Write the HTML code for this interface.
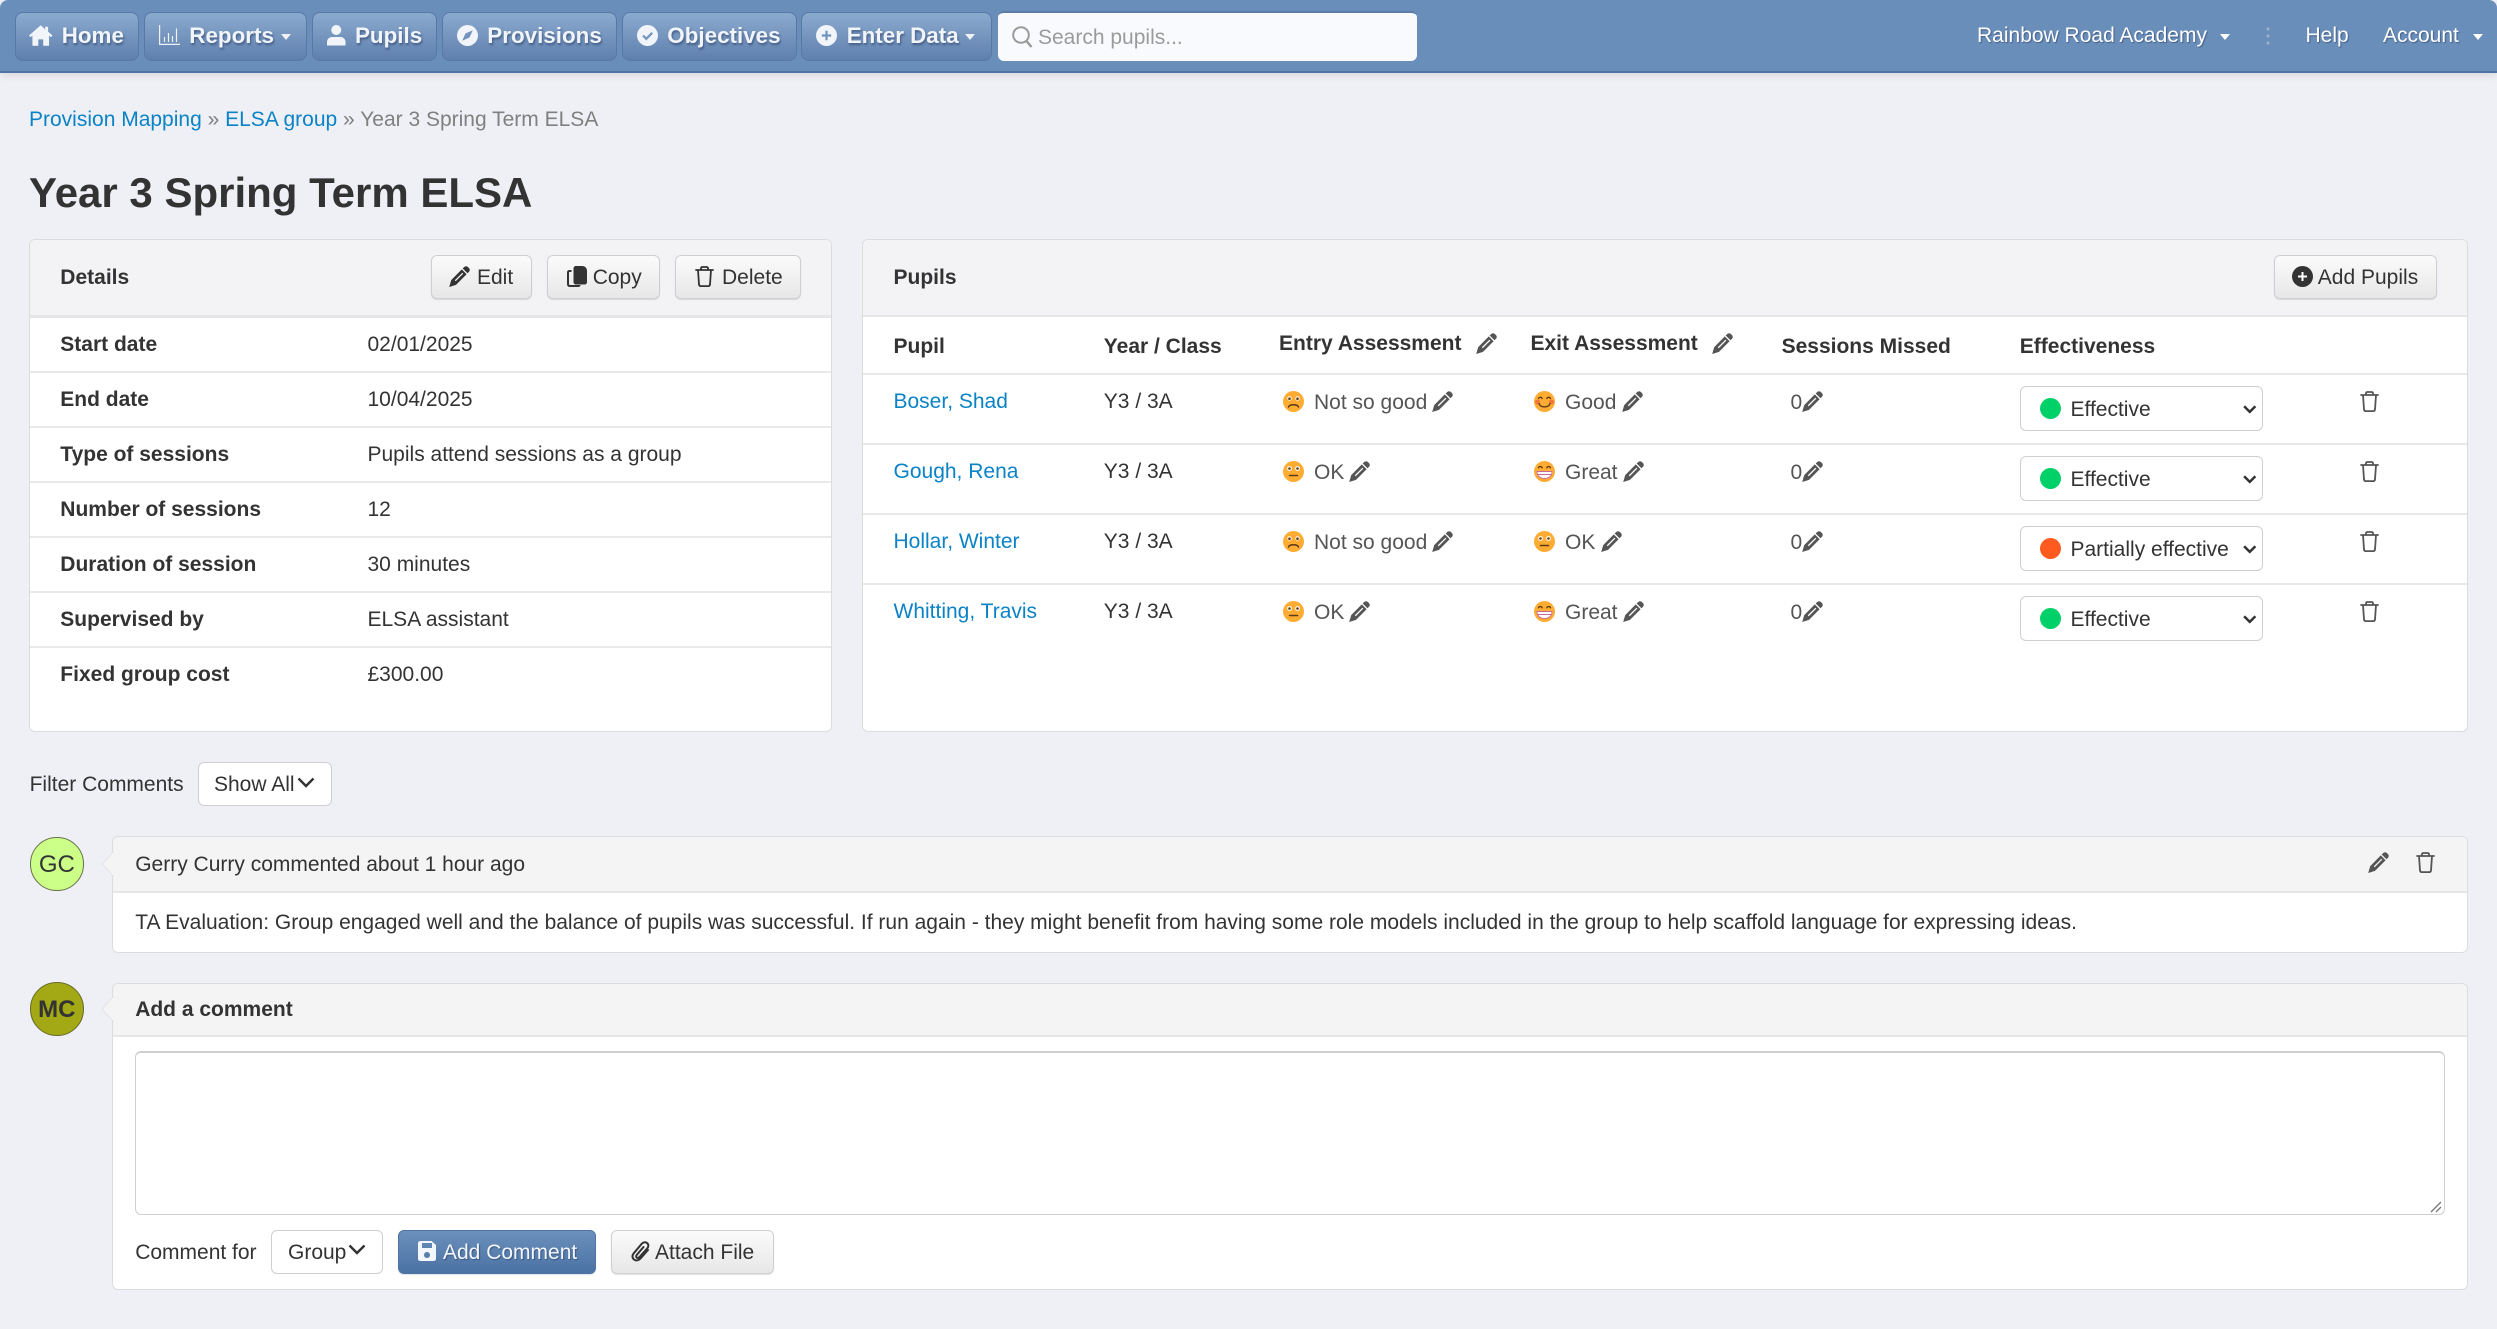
<!DOCTYPE html>
<html><head><meta charset="utf-8"><title>Year 3 Spring Term ELSA</title>
<style>
html,body{margin:0;padding:0;width:2497px;height:1329px;overflow:hidden;background:#eff0f6;font-family:"Liberation Sans",sans-serif;font-size:21px;color:#333}
.t{position:absolute;white-space:nowrap;line-height:30px;height:30px;margin-top:1px}
.b{font-weight:bold}
.a{color:#0a83c6}
.g{color:#555}
.box{position:absolute;box-sizing:border-box}
svg.i{position:absolute;overflow:visible}
#nav{left:0;top:0;width:2497px;height:73px;background:#6a8eba;border-bottom:2px solid #4f73a3;border-radius:8px 8px 0 0;box-shadow:0 3px 8px rgba(0,0,0,.09)}
.nb{position:absolute;box-sizing:border-box;top:12px;height:49px;border:1px solid #5878a6;border-radius:8px;background:linear-gradient(#8baacf,#5f80ae)}
.nt{position:absolute;white-space:nowrap;top:20px;line-height:32px;height:32px;font-size:22.4px;font-weight:bold;color:#f1f4f9;text-shadow:1px 2px 2px rgba(30,50,90,.55)}
.nr{position:absolute;white-space:nowrap;top:21px;line-height:30px;height:30px;color:#fff;text-shadow:1px 1px 1px rgba(30,50,90,.5)}
.car{position:absolute;width:0;height:0;border-left:5.5px solid transparent;border-right:5.5px solid transparent;border-top:6px solid #eef2f8}
.card{background:#fff;border:1.5px solid #dcdcdf;border-radius:6px}
.hd{position:absolute;left:0;top:0;right:0;background:#f3f3f6;border-radius:6px 6px 0 0}
.ln{position:absolute;height:2px;background:#e9e9eb}
.btn{position:absolute;box-sizing:border-box;top:255px;height:44px;border:1.5px solid #cfcfd2;border-radius:6px;background:linear-gradient(#fbfbfb,#e7e7e8);box-shadow:0 1px 1px rgba(0,0,0,.12)}
.sel{position:absolute;box-sizing:border-box;background:#fff;border:1.5px solid #cfcfd2;border-radius:6px}
.dot{position:absolute;width:21px;height:21px;border-radius:50%}
</style></head><body>
<svg width="0" height="0" style="position:absolute">
<defs>
<symbol id="pen" viewBox="0 0 21 21"><path fill="currentColor" d="M15.2 1a2.6 2.6 0 0 1 3.7 0l1.100 1.100a2.600 2.600 0 0 1 0 3.700l-1.500 1.500-4.800-4.800z"/><path fill="currentColor" fill-rule="evenodd" d="M12.800 3.400l4.800 4.800L7 18.900.2 21l2-6.900zM13.400 6.700L5.800 14.300l.9.900L14.300 7.600z"/></symbol>
<symbol id="tr" viewBox="0 0 19 21"><path fill="none" stroke="currentColor" stroke-width="1.800" stroke-linecap="round" d="M1 4h17M6 4V2.400C6 1.400 6.800 1 7.500 1h4c.7 0 1.500.4 1.500 1.400V4M3 4l1 14.400c.1 1 .8 1.700 1.700 1.700h7.600c.9 0 1.600-.7 1.700-1.700L16 4"/></symbol>
<symbol id="sad" viewBox="0 0 21 21"><circle cx="10.500" cy="10.500" r="10.500" fill="#ffac33"/><circle cx="6.500" cy="7.500" r="2.200" fill="#fff"/><circle cx="14.500" cy="7.500" r="2.200" fill="#fff"/><circle cx="6.500" cy="7.700" r="1.300" fill="#5b3a1a"/><circle cx="14.500" cy="7.700" r="1.300" fill="#5b3a1a"/><path d="M5.500 16c1.200-3 8.800-3 10 0" fill="none" stroke="#5b3a1a" stroke-width="1.500" stroke-linecap="round"/></symbol>
<symbol id="ok" viewBox="0 0 21 21"><circle cx="10.500" cy="10.500" r="10.500" fill="#ffac33"/><circle cx="6.500" cy="7.500" r="2.400" fill="#fff"/><circle cx="14.500" cy="7.500" r="2.400" fill="#fff"/><circle cx="6.500" cy="7.500" r="1.300" fill="#5b3a1a"/><circle cx="14.500" cy="7.500" r="1.300" fill="#5b3a1a"/><path d="M6.500 14.500h8" stroke="#5b3a1a" stroke-width="1.500" stroke-linecap="round"/></symbol>
<symbol id="gd" viewBox="0 0 21 21"><circle cx="10.500" cy="10.500" r="10.500" fill="#ffac33"/><circle cx="3.500" cy="11" r="2.400" fill="#f4743b"/><circle cx="17.500" cy="11" r="2.400" fill="#f4743b"/><path d="M4.500 7.500c.7-1.700 3-1.700 3.700 0M12.800 7.500c.7-1.700 3-1.700 3.700 0M5 12.500c1.500 4.500 9.500 4.500 11 0" fill="none" stroke="#5b3a1a" stroke-width="1.300" stroke-linecap="round"/></symbol>
<symbol id="gr" viewBox="0 0 21 21"><circle cx="10.500" cy="10.500" r="10.500" fill="#ffac33"/><path d="M4.500 6.800c.7-1.700 3-1.700 3.700 0M12.800 6.800c.7-1.700 3-1.700 3.700 0" fill="none" stroke="#5b3a1a" stroke-width="1.300" stroke-linecap="round"/><path d="M3 10.500h15c0 4.500-3.500 7-7.500 7S3 15 3 10.500z" fill="#fff" stroke="#c46aa0" stroke-width=".9"/><path d="M3.400 13.500h14.200" stroke="#c46aa0" stroke-width="1"/></symbol>
<symbol id="ch" viewBox="0 0 18 11"><path d="M1.500 1.500L9 9l7.500-7.500" fill="none" stroke="currentColor" stroke-width="2.400"/></symbol>
<symbol id="ch2" viewBox="0 0 18 11"><path d="M1.500 1.500L9 9l7.500-7.500" fill="none" stroke="currentColor" stroke-width="3.300"/></symbol>
</defs></svg>

<div class="box" id="nav" style="position:absolute"></div>
<div class="nb" style="left:14.500px;width:124.500px"></div>
<div class="nb" style="left:144.300px;width:163px"></div>
<div class="nb" style="left:312.300px;width:125px"></div>
<div class="nb" style="left:442.300px;width:175px"></div>
<div class="nb" style="left:622.300px;width:174.500px"></div>
<div class="nb" style="left:801.300px;width:190.500px"></div>

<svg class="i" style="left:29px;top:24.500px" width="23.500" height="21" viewBox="0 0 24 21"><path fill="#f1f4f9" d="M12 0L0 10.500l1.500 1.700L3.500 10.600V21h6v-6.500h5V21h6V10.600l2 1.600 1.500-1.700-4.500-3.900V1.500h-3v2.700z"/></svg>
<div class="nt" style="left:61.700px">Home</div>
<svg class="i" style="left:159px;top:25px" width="21" height="20" viewBox="0 0 21 20"><path fill="none" stroke="#eef2f8" stroke-width="1.200" d="M.6 0v19.400H21M5.500 17v-5M9.500 17V8M13.500 17v-6M17.500 17V3.500"/></svg>
<div class="nt" style="left:189.300px">Reports</div><div class="car" style="left:281px;top:34px"></div>
<svg class="i" style="left:326.700px;top:25px" width="18.500" height="20.500" viewBox="0 0 18.500 20.500"><circle cx="9.250" cy="5" r="5" fill="#f1f4f9"/><path fill="#f1f4f9" d="M0 20.500v-3.500c0-3 2.500-5 5-5h8.500c2.500 0 5 2 5 5v3.500z"/></svg>
<div class="nt" style="left:355px">Pupils</div>
<svg class="i" style="left:456.700px;top:25px" width="21" height="21" viewBox="0 0 21 21"><circle cx="10.500" cy="10.500" r="10.500" fill="#f1f4f9"/><path fill="#7394bf" d="M15.800 5.200L12.500 12.500 5.200 15.800 8.500 8.500z"/></svg>
<div class="nt" style="left:487.300px">Provisions</div>
<svg class="i" style="left:637px;top:25px" width="21" height="21" viewBox="0 0 21 21"><circle cx="10.500" cy="10.500" r="10.500" fill="#f1f4f9"/><path fill="none" stroke="#7394bf" stroke-width="2.200" d="M6 10.500l3.300 3.300L15.200 7.800"/></svg>
<div class="nt" style="left:667.300px">Objectives</div>
<svg class="i" style="left:816px;top:25px" width="21" height="21" viewBox="0 0 21 21"><circle cx="10.500" cy="10.500" r="10.500" fill="#f1f4f9"/><path fill="none" stroke="#7394bf" stroke-width="2.200" d="M10.500 5.800v9.400M5.800 10.500h9.400"/></svg>
<div class="nt" style="left:846.700px">Enter Data</div><div class="car" style="left:965px;top:34px"></div>

<div class="box" style="left:997.700px;top:11px;width:419.300px;height:50px;background:#f9fafd;border-radius:6px;border-top:2px solid #5d7ca8"></div>
<svg class="i" style="left:1011.500px;top:26px" width="21" height="22" viewBox="0 0 21 22"><circle cx="9" cy="9" r="7.800" fill="none" stroke="#9a9a9a" stroke-width="2"/><path d="M14.500 15l5 6" stroke="#9a9a9a" stroke-width="2.400"/></svg>
<div class="t" style="left:1038px;top:22px;color:#9b9b9b">Search pupils...</div>

<div class="nr" style="left:1977px">Rainbow Road Academy</div><div class="car" style="left:2220px;top:34px;border-top-color:#fff"></div>
<svg class="i" style="left:2266px;top:27px" width="4" height="18"><circle cx="2" cy="2" r="1.500" fill="#9ab2d0"/><circle cx="2" cy="9" r="1.500" fill="#9ab2d0"/><circle cx="2" cy="16" r="1.500" fill="#9ab2d0"/></svg>
<div class="nr" style="left:2305.500px">Help</div>
<div class="nr" style="left:2383px">Account</div><div class="car" style="left:2473px;top:34px;border-top-color:#fff"></div>

<div class="t" style="left:29px;top:104px"><span class="a">Provision Mapping</span><span style="color:#808080"> » </span><span class="a">ELSA group</span><span style="color:#808080"> » Year 3 Spring Term ELSA</span></div>
<div class="t b" style="left:29px;top:167px;font-size:42px;line-height:50px;height:50px">Year 3 Spring Term ELSA</div>

<!-- Details card -->
<div class="box card" style="left:29px;top:239px;width:803px;height:493px"><div class="hd" style="height:75px;border-bottom:3px solid #e6e6e8"></div></div>
<div class="t b" style="left:60.300px;top:261.500px">Details</div>
<div class="btn" style="left:431.300px;width:100.500px"></div>
<svg class="i" style="left:449px;top:266px;color:#333" width="21" height="21"><use href="#pen"/></svg>
<div class="t" style="left:477px;top:261.500px">Edit</div>
<div class="btn" style="left:547.300px;width:112.500px"></div>
<svg class="i" style="left:566.700px;top:266px" width="20" height="21" viewBox="0 0 20 21"><path fill="#333" d="M9 0h6c3 0 5 2 5 5v11c0 1.500-1 2.500-2.500 2.500H9C7.500 18.500 6.500 17.500 6.500 16V2.500C6.500 1 7.500 0 9 0z"/><path fill="none" stroke="#333" stroke-width="2" d="M4.500 5H2.500C1.500 5 1 5.500 1 6.500V18c0 1 .5 2 2 2h8c1 0 1.500-.5 1.500-1"/></svg>
<div class="t" style="left:592.700px;top:261.500px">Copy</div>
<div class="btn" style="left:675.300px;width:125.500px"></div>
<svg class="i" style="left:695px;top:266px;color:#333" width="19" height="21"><use href="#tr"/></svg>
<div class="t" style="left:722px;top:261.500px">Delete</div>

<div class="ln" style="left:30px;top:371px;width:801px"></div>
<div class="ln" style="left:30px;top:426px;width:801px"></div>
<div class="ln" style="left:30px;top:481px;width:801px"></div>
<div class="ln" style="left:30px;top:536px;width:801px"></div>
<div class="ln" style="left:30px;top:591px;width:801px"></div>
<div class="ln" style="left:30px;top:646px;width:801px"></div>
<div class="t b" style="left:60.300px;top:329px">Start date</div><div class="t" style="left:367.500px;top:329px">02/01/2025</div>
<div class="t b" style="left:60.300px;top:384px">End date</div><div class="t" style="left:367.500px;top:384px">10/04/2025</div>
<div class="t b" style="left:60.300px;top:439px">Type of sessions</div><div class="t" style="left:367.500px;top:439px">Pupils attend sessions as a group</div>
<div class="t b" style="left:60.300px;top:494px">Number of sessions</div><div class="t" style="left:367.500px;top:494px">12</div>
<div class="t b" style="left:60.300px;top:549px">Duration of session</div><div class="t" style="left:367.500px;top:549px">30 minutes</div>
<div class="t b" style="left:60.300px;top:604px">Supervised by</div><div class="t" style="left:367.500px;top:604px">ELSA assistant</div>
<div class="t b" style="left:60.300px;top:659px">Fixed group cost</div><div class="t" style="left:367.500px;top:659px">£300.00</div>

<!-- Pupils card -->
<div class="box card" style="left:862px;top:239px;width:1606px;height:493px"><div class="hd" style="height:75px;border-bottom:2px solid #e6e6e8"></div></div>
<div class="t b" style="left:893.500px;top:261.500px">Pupils</div>
<div class="btn" style="left:2273.500px;width:163px"></div>
<svg class="i" style="left:2292px;top:266px" width="21" height="21" viewBox="0 0 21 21"><circle cx="10.500" cy="10.500" r="10.500" fill="#333"/><path fill="none" stroke="#fff" stroke-width="2" d="M10.500 6v9M6 10.500h9"/></svg>
<div class="t" style="left:2317.800px;top:261.500px">Add Pupils</div>

<div class="t b" style="left:893.500px;top:331px">Pupil</div>
<div class="t b" style="left:1103.800px;top:331px">Year / Class</div>
<div class="t b" style="left:1279px;top:328px">Entry Assessment</div>
<svg class="i g" style="left:1476px;top:333px" width="21" height="21"><use href="#pen"/></svg>
<div class="t b" style="left:1530.500px;top:328px">Exit Assessment</div>
<svg class="i g" style="left:1711.500px;top:333px" width="21" height="21"><use href="#pen"/></svg>
<div class="t b" style="left:1781.600px;top:331px">Sessions Missed</div>
<div class="t b" style="left:2019.800px;top:331px">Effectiveness</div>
<div class="ln" style="left:863px;top:373px;width:1604px"></div>
<div class="ln" style="left:863px;top:443px;width:1604px"></div>
<div class="ln" style="left:863px;top:513px;width:1604px"></div>
<div class="ln" style="left:863px;top:583px;width:1604px"></div>

<!-- row 1 -->
<div class="t a" style="left:893.500px;top:386px">Boser, Shad</div>
<div class="t" style="left:1103.800px;top:386px">Y3 / 3A</div>
<svg class="i" style="left:1282.700px;top:391px" width="21" height="21"><use href="#sad"/></svg>
<div class="t g" style="left:1314px;top:387px">Not so good</div>
<svg class="i g" style="left:1432.300px;top:391px" width="21" height="21"><use href="#pen"/></svg>
<svg class="i" style="left:1534px;top:391px" width="21" height="21"><use href="#gd"/></svg>
<div class="t g" style="left:1565px;top:387px">Good</div>
<svg class="i g" style="left:1622.300px;top:391px" width="21" height="21"><use href="#pen"/></svg>
<div class="t g" style="left:1790.500px;top:387px">0</div>
<svg class="i g" style="left:1801.500px;top:391px" width="21" height="21"><use href="#pen"/></svg>
<div class="sel" style="left:2019.800px;top:386px;width:243px;height:45px"></div>
<div class="dot" style="left:2039.600px;top:398px;background:#00d068"></div>
<div class="t" style="left:2070.500px;top:394px">Effective</div>
<svg class="i" style="left:2243px;top:404.500px;color:#333" width="13.500" height="8.500"><use href="#ch2"/></svg>
<svg class="i g" style="left:2360px;top:391px" width="19" height="21"><use href="#tr"/></svg>

<!-- row 2 -->
<div class="t a" style="left:893.500px;top:456px">Gough, Rena</div>
<div class="t" style="left:1103.800px;top:456px">Y3 / 3A</div>
<svg class="i" style="left:1282.700px;top:461px" width="21" height="21"><use href="#ok"/></svg>
<div class="t g" style="left:1314px;top:457px">OK</div>
<svg class="i g" style="left:1349.300px;top:461px" width="21" height="21"><use href="#pen"/></svg>
<svg class="i" style="left:1534px;top:461px" width="21" height="21"><use href="#gr"/></svg>
<div class="t g" style="left:1565px;top:457px">Great</div>
<svg class="i g" style="left:1623.300px;top:461px" width="21" height="21"><use href="#pen"/></svg>
<div class="t g" style="left:1790.500px;top:457px">0</div>
<svg class="i g" style="left:1801.500px;top:461px" width="21" height="21"><use href="#pen"/></svg>
<div class="sel" style="left:2019.800px;top:456px;width:243px;height:45px"></div>
<div class="dot" style="left:2039.600px;top:468px;background:#00d068"></div>
<div class="t" style="left:2070.500px;top:464px">Effective</div>
<svg class="i" style="left:2243px;top:474.500px;color:#333" width="13.500" height="8.500"><use href="#ch2"/></svg>
<svg class="i g" style="left:2360px;top:461px" width="19" height="21"><use href="#tr"/></svg>

<!-- row 3 -->
<div class="t a" style="left:893.500px;top:526px">Hollar, Winter</div>
<div class="t" style="left:1103.800px;top:526px">Y3 / 3A</div>
<svg class="i" style="left:1282.700px;top:531px" width="21" height="21"><use href="#sad"/></svg>
<div class="t g" style="left:1314px;top:527px">Not so good</div>
<svg class="i g" style="left:1432.300px;top:531px" width="21" height="21"><use href="#pen"/></svg>
<svg class="i" style="left:1534px;top:531px" width="21" height="21"><use href="#ok"/></svg>
<div class="t g" style="left:1565px;top:527px">OK</div>
<svg class="i g" style="left:1601px;top:531px" width="21" height="21"><use href="#pen"/></svg>
<div class="t g" style="left:1790.500px;top:527px">0</div>
<svg class="i g" style="left:1801.500px;top:531px" width="21" height="21"><use href="#pen"/></svg>
<div class="sel" style="left:2019.800px;top:526px;width:243px;height:45px"></div>
<div class="dot" style="left:2039.600px;top:538px;background:#ff5a1f"></div>
<div class="t" style="left:2070.500px;top:534px">Partially effective</div>
<svg class="i" style="left:2243px;top:544.500px;color:#333" width="13.500" height="8.500"><use href="#ch2"/></svg>
<svg class="i g" style="left:2360px;top:531px" width="19" height="21"><use href="#tr"/></svg>

<!-- row 4 -->
<div class="t a" style="left:893.500px;top:596px">Whitting, Travis</div>
<div class="t" style="left:1103.800px;top:596px">Y3 / 3A</div>
<svg class="i" style="left:1282.700px;top:601px" width="21" height="21"><use href="#ok"/></svg>
<div class="t g" style="left:1314px;top:597px">OK</div>
<svg class="i g" style="left:1349.300px;top:601px" width="21" height="21"><use href="#pen"/></svg>
<svg class="i" style="left:1534px;top:601px" width="21" height="21"><use href="#gr"/></svg>
<div class="t g" style="left:1565px;top:597px">Great</div>
<svg class="i g" style="left:1623.300px;top:601px" width="21" height="21"><use href="#pen"/></svg>
<div class="t g" style="left:1790.500px;top:597px">0</div>
<svg class="i g" style="left:1801.500px;top:601px" width="21" height="21"><use href="#pen"/></svg>
<div class="sel" style="left:2019.800px;top:596px;width:243px;height:45px"></div>
<div class="dot" style="left:2039.600px;top:608px;background:#00d068"></div>
<div class="t" style="left:2070.500px;top:604px">Effective</div>
<svg class="i" style="left:2243px;top:614.500px;color:#333" width="13.500" height="8.500"><use href="#ch2"/></svg>
<svg class="i g" style="left:2360px;top:601px" width="19" height="21"><use href="#tr"/></svg>

<!-- filter -->
<div class="t" style="left:29.600px;top:769px">Filter Comments</div>
<div class="sel" style="left:198px;top:762.300px;width:133.500px;height:44px"></div>
<div class="t" style="left:214px;top:769px">Show All</div>
<svg class="i" style="left:297px;top:777px;color:#333" width="18" height="11"><use href="#ch"/></svg>

<!-- comment -->
<div class="box" style="left:30.100px;top:837.300px;width:53.500px;height:53.500px;border-radius:50%;background:#ccff88;border:1.500px solid #66704a"></div>
<div class="t" style="left:30.100px;top:849px;width:53.500px;text-align:center;font-size:24px">GC</div>
<div class="box card" style="left:112px;top:836px;width:2355.500px;height:117px"><div class="hd" style="height:54px;background:#f4f4f5;border-bottom:2px solid #e6e6e8"></div></div>
<svg class="i" style="left:101px;top:852px" width="12" height="24"><path d="M12 0L1 12l11 12z" fill="#f4f4f5" stroke="#e3e3e5" stroke-width="1"/><path d="M12 1v22" stroke="#f4f4f5" stroke-width="2"/></svg>
<div class="t" style="left:135.200px;top:849px">Gerry Curry commented about 1 hour ago</div>
<svg class="i g" style="left:2368.300px;top:852px" width="21" height="21"><use href="#pen"/></svg>
<svg class="i g" style="left:2415.700px;top:852px" width="19" height="21"><use href="#tr"/></svg>
<div class="t" style="left:135.200px;top:907px">TA Evaluation: Group engaged well and the balance of pupils was successful. If run again - they might benefit from having some role models included in the group to help scaffold language for expressing ideas.</div>

<!-- add comment -->
<div class="box" style="left:30.100px;top:982.300px;width:53.500px;height:53.500px;border-radius:50%;background:#a3a815;border:1.500px solid #66692a"></div>
<div class="t b" style="left:30.100px;top:994px;width:53.500px;text-align:center;font-size:24px">MC</div>
<div class="box card" style="left:112px;top:983px;width:2355.500px;height:307px"><div class="hd" style="height:51px;background:#f4f4f5;border-bottom:2px solid #e6e6e8"></div></div>
<svg class="i" style="left:101px;top:997px" width="12" height="24"><path d="M12 0L1 12l11 12z" fill="#f4f4f5" stroke="#e3e3e5" stroke-width="1"/><path d="M12 1v22" stroke="#f4f4f5" stroke-width="2"/></svg>
<div class="t b" style="left:135.200px;top:994px">Add a comment</div>
<div class="sel" style="left:135.200px;top:1051.300px;width:2309.500px;height:164px;border-top-width:2px"></div>
<svg class="i" style="left:2430px;top:1201px" width="12" height="12"><path d="M1 11L11 1M6 11l5-5" stroke="#777" stroke-width="1.300"/></svg>
<div class="t" style="left:135.200px;top:1237px">Comment for</div>
<div class="sel" style="left:271px;top:1230px;width:112px;height:44px"></div>
<div class="t" style="left:288px;top:1237px">Group</div>
<svg class="i" style="left:348px;top:1244px;color:#333" width="18" height="11"><use href="#ch"/></svg>
<div class="btn" style="left:398px;top:1230px;width:198px;background:linear-gradient(#6c90bc,#4a72a3);border-color:#4f75a5"></div>
<svg class="i" style="left:417.500px;top:1241px" width="18" height="20" viewBox="0 0 18 20"><path fill-rule="evenodd" fill="#f3f6fa" d="M2.500 0h11L18 4v13.500c0 1.500-1 2.500-2.500 2.500h-13C1 20 0 19 0 17.500v-15C0 1 1 0 2.500 0zM4 2v5h10V2zM9 11a3 3 0 1 0 .01 0z"/></svg>
<div class="t" style="left:443px;top:1237px;color:#f3f6fa;text-shadow:1px 1px 1px rgba(30,50,90,.5)">Add Comment</div>
<div class="btn" style="left:611.400px;top:1230px;width:162.500px"></div>
<svg class="i" style="left:630.500px;top:1241px" width="20" height="21" viewBox="0 0 20 21"><path fill="none" stroke="#333" stroke-width="2" stroke-linecap="round" d="M17 9l-7.500 8.500c-2 2.200-4.600 2.500-6.500 1-2-1.600-2-4.300-.2-6.300L10.500 3c1.600-1.800 3.800-2.200 5.500-1 1.800 1.300 1.700 3.700.3 5.300L8.500 16c-1 1-2 1.200-2.800.6s-.7-1.700.2-2.800L12.500 6"/></svg>
<div class="t" style="left:655px;top:1237px">Attach File</div>
</body></html>
